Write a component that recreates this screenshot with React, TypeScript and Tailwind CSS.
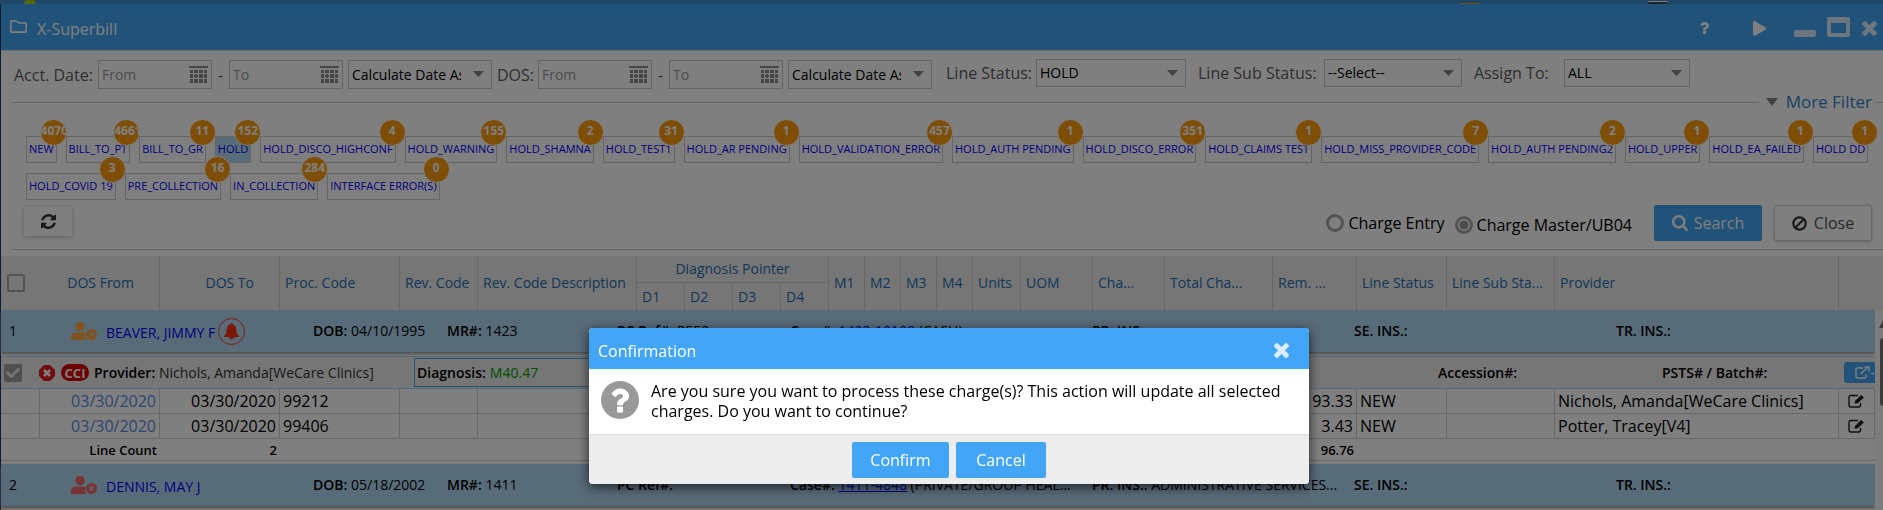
import React, { useState } from 'react';
import { FaRegFolder, FaPlay, FaCheck } from 'react-icons/fa';

const statuses = [
  { name: 'NEW', count: 4070 },
  { name: 'BILL_TO_PT', count: 4661 },
  { name: 'BILL_TO_GR', count: 11 },
  { name: 'HOLD', count: 152 },
  { name: 'HOLD_DISCO_HIGHCONF', count: 4 },
  { name: 'HOLD_WARNING', count: 155 },
  { name: 'HOLD_SHAMNA', count: 2 },
  { name: 'HOLD_TEST1', count: 31 },
  { name: 'HOLD_AR PENDING', count: 1 },
  { name: 'HOLD_VALIDATION_ERROR', count: 457 },
  { name: 'HOLD_AUTH PENDING', count: 1 },
  { name: 'HOLD_DISCO_ERROR', count: 351 },
  { name: 'HOLD_CLAIMS TEST', count: 1 },
  { name: 'HOLD_MISS_PROVIDER_CODE', count: 7 },
  { name: 'HOLD_AUTH PENDING2', count: 2 },
  { name: 'HOLD_UPPER', count: 1 },
  { name: 'HOLD_EA_FAILED', count: 1 },
  { name: 'HOLD DD', count: 1 },
  { name: 'HOLD_COVID 19', count: 3 },
  { name: 'PRE_COLLECTION', count: 16 },
  { name: 'IN_COLLECTION', count: 284 },
  { name: 'INTERFACE ERROR(S)', count: 0 },
];

const lines = [
  { code: '99212', rem: '93.33', provider: 'Nichols, Amanda[WeCare Clinics]' },
  { code: '99406', rem: '3.43', provider: 'Potter, Tracey[V4]' },
];

const columns = [
  'w-[39px]', 'w-[120px]', 'w-[120px]', 'w-[120px]', 'w-[78px]', 'w-[159px]',
  'w-[48px]', 'w-[48px]', 'w-[48px]', 'w-[48px]',
  'w-[36px]', 'w-[36px]', 'w-[36px]', 'w-[36px]',
  'w-[48px]', 'w-[72px]', 'w-[72px]', 'w-[108px]', 'w-[84px]', 'w-[90px]', 'w-[108px]',
  '', 'w-[36px]', 'w-[8px]',
];

const CloseIcon = ({ className }: { className: string }) => (
  <svg className={className} viewBox="110 366 1188 1188" fill="currentColor"><path d="M1298 1322q0 40-28 68l-136 136q-28 28-68 28t-68-28l-294-294-294 294q-28 28-68 28t-68-28l-136-136q-28-28-28-68t28-68l294-294-294-294q-28-28-28-68t28-68l136-136q28-28 68-28t68 28l294 294 294-294q28-28 68-28t68 28l136 136q28 28 28 68t-28 68l-294 294 294 294q28 28 28 68z" /></svg>
);

const QuestionIcon = ({ className }: { className: string }) => (
  <svg className={className} viewBox="60 128 960 1280" fill="currentColor"><path d="M704 1128v240q0 16-12 28t-28 12h-240q-16 0-28-12t-12-28v-240q0-16 12-28t28-12h240q16 0 28 12t12 28zm316-600q0 54-15.500 101t-35 76.500-55 59.500-57.500 43.500-61 35.500q-41 23-68.500 65t-27.500 67q0 17-12 32.500t-28 15.500h-240q-15 0-25.500-18.500t-10.500-37.500v-45q0-83 65-156.500t143-108.500q59-27 84-56t25-76q0-42-46.500-74t-107.500-32q-65 0-108 29-35 25-107 115-13 16-31 16-12 0-25-8l-164-125q-13-10-15.500-25t5.500-28q160-266 464-266 80 0 161 31t146 83 106 127.500 41 158.500z" /></svg>
);

const RefreshIcon = ({ className }: { className: string }) => (
  <svg className={className} viewBox="0 0 1536 1536" fill="currentColor"><path d="M1511 928q0 5-1 7-64 268-268 434.500t-478 166.500q-146 0-282.500-55t-243.500-157l-129 129q-19 19-45 19t-45-19-19-45v-448q0-26 19-45t45-19h448q26 0 45 19t19 45-19 45l-137 137q71 66 161 102t187 36q134 0 250-65t186-179q11-17 53-117 8-23 30-23h192q13 0 22.500 9.500t9.500 22.500zm25-800v448q0 26-19 45t-45 19h-448q-26 0-45-19t-19-45 19-45l138-138q-148-137-349-137-134 0-250 65t-186 179q-11 17-53 117-8 23-30 23h-199q-13 0-22.500-9.500t-9.500-22.500v-7q65-268 270-434.500t480-166.500q146 0 284 55.500t245 156.500l130-129q19-19 45-19t45 19 19 45z" /></svg>
);

const SearchIcon = ({ className }: { className: string }) => (
  <svg className={className} viewBox="0 0 1664 1664" fill="currentColor"><path d="M1152 704q0-185-131.500-316.500t-316.500-131.500-316.500 131.500-131.500 316.500 131.500 316.500 316.500 131.500 316.500-131.500 131.500-316.500zm512 832q0 52-38 90t-90 38q-54 0-90-38l-343-342q-179 124-399 124-143 0-273.500-55.500t-225-150-150-225-55.500-273.500 55.500-273.500 150-225 225-150 273.500-55.500 273.500 55.500 225 150 150 225 55.500 273.500q0 220-124 399l343 343q37 37 37 90z" /></svg>
);

// person with a small status disc: clock for pending, cross for rejected
const UserIcon = ({ className, pending }: { className: string; pending?: boolean }) => (
  <svg className={className} viewBox="0 0 26 18" fill="currentColor">
    <circle cx="9" cy="4.500" r="4.700" />
    <path d="M0 18V15.500Q0 10.500 5 10.500H13Q14.500 10.500 15 10.800Q13 13.500 15 18Z" />
    <circle cx="20.500" cy="12.500" r="5.500" />
    {pending
      ? <path d="M20.500 9.500V13H23" fill="none" stroke="#b1d6f2" strokeWidth="1.400" />
      : <path d="M18.500 10.500 22.500 14.500M22.500 10.500 18.500 14.500" fill="none" stroke="#b1d6f2" strokeWidth="1.600" />}
  </svg>
);

function DateField({ label, placeholder }: { label: string; placeholder: string }) {
  return (
    <div className="flex h-[29px] w-[114px] items-center border border-[#c8c8c8] bg-white pr-[3px]">
      <input aria-label={label} placeholder={placeholder} className="w-full min-w-0 flex-1 bg-transparent pl-[3px] text-[14px] text-black outline-none placeholder:text-[#9a9a9a]" />
      <svg className="h-[18px] w-[19px] shrink-0" viewBox="0 0 19 18" fill="#8c8c8c">
        <path d="M0 0h19v2H0zM1 4h3v3H1zM5 4h4v3H5zM10 4h4v3h-4zM15 4h3v3h-3zM1 8h3v4H1zM15 8h3v4h-3zM10 8h4v4h-4zM1 13h3v4H1zM5 13h4v4H5zM10 13h4v4h-4zM15 13h3v4h-3zM6 8h2v4H6zM5 9h4v2H5z" />
      </svg>
    </div>
  );
}

function SelectField({ id, label, value, className }: { id: string; label?: string; value: string; className: string }) {
  return (
    <div className={`relative ${className}`}>
      <select id={id} aria-label={label} className="h-full w-full appearance-none overflow-hidden rounded-none border border-[#c8c8c8] bg-white pl-[3px] pr-[30px] text-[14px] text-black">
        <option>{value}</option>
      </select>
      <svg className="pointer-events-none absolute right-2 top-[11px] h-[6px] w-[11px]" viewBox="0 0 11 6" fill="#848484"><path d="M0 0h11L5.5 6z" /></svg>
    </div>
  );
}

function PatientRow({ no, name, dob, mr, pcRef, caseNo, caseType, insurance, alert }: any) {
  return (
    <tr>
      <td colSpan={23} className="h-[42px] bg-[#b1d6f2] p-0 text-[14px] shadow-[0_2px_3px_#999]">
        <div className="flex items-center whitespace-nowrap">
          <span className="w-[70px] pl-2">{no}</span>
          <div className="flex w-[242px] items-center">
            <UserIcon pending={alert} className={`h-[18px] w-[26px] shrink-0 ${alert ? 'text-[#ffa83c]' : 'text-[#f06464]'}`} />
            <a href="#" className="pl-[9px] pr-[3px] pt-[4px] text-[#0000ff]">{name}</a>
            {alert && (
              <span className="flex size-[27px] shrink-0 items-center justify-center rounded-full border border-[#ff3d14]">
                <svg className="size-[17px]" viewBox="0 0 17 17" fill="#ff2f00"><path d="M8.500 0Q9.500 0 9.500 1.300Q13 2 13.200 6.500Q13.300 11 16 13V14H11Q10.800 16.500 8.500 16.500T6 14H1V13Q3.700 11 3.800 6.500Q4 2 7.500 1.300Q7.500 0 8.500 0Z" /></svg>
              </span>
            )}
          </div>
          <span className="w-[134px]"><b className="font-semibold">DOB:</b> {dob}</span>
          <span className="w-[170px]"><b className="font-semibold">MR#:</b> {mr}</span>
          <span className="w-[173px]"><b className="font-semibold">PC Ref#:</b> {pcRef}</span>
          <span className="w-[302px]"><b className="font-semibold">Case#:</b> <a href="#" className="text-[#0000ff] underline">{caseNo}</a> {caseType}</span>
          <span className="w-[262px]"><b className="font-semibold">PR. INS.:</b> {insurance}</span>
          <span className="w-[262px]"><b className="font-semibold">SE. INS.:</b></span>
          <b className="font-semibold">TR. INS.:</b>
        </div>
      </td>
      <td className="p-0"></td>
    </tr>
  );
}

export default function App() {
  const [active, setActive] = useState('HOLD');
  const [mode, setMode] = useState('master');

  const th = 'border-r border-[#cfcfcf] px-[5px] text-left font-normal';
  const cell = 'border-b border-r border-[#d0d0d0] px-[3px]';
  const radio = 'size-[18px] appearance-none rounded-full border-[3px] border-[#a6a6a6] bg-white';

  return (
    <div className="relative h-screen overflow-hidden bg-[#3b8cce] font-['Open_Sans','Noto_Sans',sans-serif] text-black">
      <div className="flex h-1 items-end pl-6">
        <span className="h-1 w-3 rounded-t-full bg-[#a8c81e]"></span>
        <span className="flex-1"></span>
        <span className="mr-[167px] h-px w-5 bg-[#f0a020]"></span>
        <span className="mr-[214px] h-[3px] w-[22px] rounded-t-full border-t border-white bg-[#444466]"></span>
      </div>

      <div className="min-h-screen border-l border-[#223a58] bg-white">
        <header className="flex h-[46px] items-center bg-[#42a5f5] pl-[9px] pr-[6px] text-white">
          <FaRegFolder className="mb-[1px] size-[17px]" />
          <h1 className="flex-1 pl-[10px] pt-[4px] text-[16px] font-medium">X-Superbill</h1>
          <button aria-label="Help" className="mr-[43px] mt-[2px]"><QuestionIcon className="h-[12px] w-[9px]" /></button>
          <button aria-label="Run" className="mr-[27px] mt-[2px]"><FaPlay className="size-[15px]" /></button>
          <button aria-label="Minimize" className="mr-[11px] mt-[12px] h-[7px] w-[22px] rounded-[2px] bg-[#d9edfd]"></button>
          <button aria-label="Maximize" className="mr-[12px] h-[20px] w-[23px] rounded-[2px] border-4 border-t-[6px] border-[#d9edfd]"></button>
          <button aria-label="Close window" className="mt-[2px]"><CloseIcon className="size-[15px] text-[#d9edfd]" /></button>
        </header>

        <section className="flex h-[52px] items-center border-t border-[#d8d8d8] pb-[4px] pl-[13px] text-[16px] text-[#5c5c5c]">
          <span className="w-[84px]">Acct. Date:</span>
          <DateField label="Account date from" placeholder="From" />
          <span className="w-[17px] text-center">-</span>
          <DateField label="Account date to" placeholder="To" />
          <SelectField id="acctRange" label="Account date range" value="Calculate Date As" className="ml-[5px] h-[29px] w-[144px]" />
          <span className="w-[46px] pl-[5px]">DOS:</span>
          <DateField label="DOS from" placeholder="From" />
          <span className="w-[17px] text-center">-</span>
          <DateField label="DOS to" placeholder="To" />
          <SelectField id="dosRange" label="DOS range" value="Calculate Date As" className="ml-[5px] h-[29px] w-[144px]" />
          <div className="flex items-center pb-[4px] whitespace-nowrap">
            <label htmlFor="lineStatus" className="w-[104px] pl-[14px]">Line Status:</label>
            <SelectField id="lineStatus" value="HOLD" className="h-[28px] w-[150px]" />
            <label htmlFor="lineSub" className="w-[138px] pl-[12px]">Line Sub Status:</label>
            <SelectField id="lineSub" value="--Select--" className="h-[28px] w-[138px]" />
            <label htmlFor="assignTo" className="w-[102px] pl-[12px]">Assign To:</label>
            <SelectField id="assignTo" value="ALL" className="h-[28px] w-[126px]" />
          </div>
        </section>

        <div className="flex h-0 items-center pl-[11px]">
          <span className="h-px flex-1 bg-[#c8c8c8]"></span>
          <button className="flex items-center gap-2 pl-[7px] pr-[3px] text-[17px] text-[#3484c6]">
            <svg className="h-[8px] w-[12px]" viewBox="0 0 12 8" fill="#848484"><path d="M0 0h12L6 8z" /></svg>
            More Filter
          </button>
          <span className="h-px w-2 bg-[#c8c8c8]"></span>
        </div>

        <ul className="flex flex-wrap gap-x-[9px] gap-y-[10px] pl-[25px] pr-2 pt-[34px]">
          {statuses.map((status) => (
            <li key={status.name} className="relative">
              <button
                onClick={() => setActive(status.name)}
                className={`block h-[27px] border border-[#c8c8c8] px-[2px] text-[11px] whitespace-nowrap text-[#0000ff] ${active === status.name ? 'bg-[#b3d9f5]' : ''}`}
              >
                {status.name}
              </button>
              <span className="absolute -right-[10px] -top-[17px] size-[27px] overflow-hidden rounded-full border border-white bg-[#ff9c0c] pt-[2px] text-center text-[12px] font-bold text-white">
                {status.count}
              </span>
            </li>
          ))}
        </ul>

        <div className="flex h-[49px] items-center pb-[3px] pl-[23px] pr-[11px] text-[16px]">
          <button aria-label="Refresh" className="mb-[3px] flex h-[29px] w-[48px] items-center justify-center bg-white shadow-[0_1px_5px_#bbb]">
            <RefreshIcon className="size-[15px] text-[#333]" />
          </button>
          <div className="flex-1"></div>
          <label className="flex items-center gap-[4px]">
            <input type="radio" name="mode" checked={mode === 'entry'} onChange={() => setMode('entry')} className={radio} />
            Charge Entry
          </label>
          <label className="ml-[10px] mr-[22px] flex items-center gap-[4px] pt-[4px]">
            <input type="radio" name="mode" checked={mode === 'master'} onChange={() => setMode('master')} className={`${radio} checked:bg-[radial-gradient(#9a9a9a_0_4px,#fff_5px)]`} />
            Charge Master/UB04
          </label>
          <button className="mr-[12px] flex h-[36px] w-[108px] items-center justify-center gap-[6px] rounded-[2px] bg-[#42a5f5] text-white">
            <SearchIcon className="size-[16px]" />
            Search
          </button>
          <button className="flex h-[36px] w-[98px] items-center justify-center gap-[7px] rounded-[2px] border border-[#d0d0d0] bg-white text-[#555] shadow-[0_1px_3px_#ccc]">
            <svg className="size-[15px]" viewBox="0 0 15 15" fill="none" stroke="#333" strokeWidth="2.200"><circle cx="7.500" cy="7.500" r="6.200" /><path d="M3.200 11.800 11.800 3.200" /></svg>
            Close
          </button>
        </div>
        <div className="ml-[11px] h-[7px] border-t border-[#c8c8c8]"></div>

        <div className="relative">
          <table className="w-full table-fixed border-separate border-spacing-0 leading-[20px]">
            <colgroup>
              {columns.map((width, i) => <col key={i} className={width} />)}
            </colgroup>
            <thead className="bg-[#ececec] text-[14px] text-[#1d6fb5]">
              <tr className="h-[27px]">
                <th rowSpan={2} className="p-0 text-left">
                  <input type="checkbox" aria-label="Select all" className="ml-[6px] block size-[18px] appearance-none rounded-[2px] border-2 border-[#a6a6a6]" />
                </th>
                <th rowSpan={2} className="border-r border-[#cfcfcf] pr-[25px] text-right font-normal">DOS From</th>
                <th rowSpan={2} className="border-r border-[#cfcfcf] pr-[25px] text-right font-normal">DOS To</th>
                <th rowSpan={2} className={th}>Proc. Code</th>
                <th rowSpan={2} className={th}>Rev. Code</th>
                <th rowSpan={2} className={th}>Rev. Code Description</th>
                <th colSpan={4} className="border-b border-r border-[#cfcfcf] font-normal">Diagnosis Pointer</th>
                {['M1', 'M2', 'M3', 'M4', 'Units', 'UOM', 'Cha...', 'Total Cha...', 'Rem. ...', 'Line Status', 'Line Sub Sta...', 'Provider'].map((name) => (
                  <th key={name} rowSpan={2} className={`${th} whitespace-nowrap`}>{name}</th>
                ))}
                <th rowSpan={2} colSpan={2}></th>
              </tr>
              <tr className="h-[27px]">
                {['D1', 'D2', 'D3', 'D4'].map((name) => <th key={name} className={th}>{name}</th>)}
              </tr>
            </thead>
            <tbody>
              <PatientRow no="1" name="BEAVER, JIMMY F" dob="04/10/1995" mr="1423" pcRef="R552" caseNo="1423-10108" caseType="(CASH)" alert />
              <tr className="h-[4px]"><td colSpan={24} className="p-0"></td></tr>
              <tr className="text-[14px]">
                <td colSpan={23} className="h-[33px] border-y border-[#a8d4f0] bg-[#ececec] p-0">
                  <div className="flex h-[31px] items-center whitespace-nowrap">
                    <span className="flex w-[38px] pl-[3px]">
                      <label className="flex size-[18px] items-center justify-center rounded-[2px] bg-[#a0a0a0]">
                        <input type="checkbox" aria-label="Select charge" defaultChecked className="peer sr-only" />
                        <FaCheck className="hidden size-[14px] text-[#ececec] peer-checked:block" />
                      </label>
                    </span>
                    <svg className="size-[16px] shrink-0" viewBox="0 0 16 16"><path d="M5 0H11L16 5V11L11 16H5L0 11V5Z" fill="#e01c1c" /><path d="M5 5 11 11M11 5 5 11" stroke="#fff" strokeWidth="2.500" /></svg>
                    <span className="ml-[6px] flex h-[17px] w-[28px] items-center justify-center rounded-full bg-[#d80000] text-[13px] font-bold text-white">CCI</span>
                    <span className="w-[325px] pl-[5px] text-[#333]"><b className="font-semibold text-black">Provider:</b> Nichols, Amanda[WeCare Clinics]</span>
                    <span className="flex h-[29px] flex-1 items-center border border-[#42a5f5] pl-[2px]">
                      <b className="pr-1 font-semibold">Diagnosis:</b> <span className="text-[#00a000]">M40.47</span>
                    </span>
                    <span className="flex w-[564px] pl-[158px]">
                      <b className="w-[224px] font-semibold">Accession#:</b>
                      <b className="font-semibold">PSTS# / Batch#:</b>
                    </span>
                    <button aria-label="Open charge" className="flex h-[21px] w-[31px] items-center rounded-l-[3px] bg-[#42a5f5] pl-[11px] text-white">
                      <svg className="h-[13px] w-[15px] shrink-0" viewBox="0 0 15 13" fill="none" stroke="currentColor" strokeWidth="1.5"><path d="M8 2H2.500Q1 2 1 3.500V10.500Q1 12 2.500 12H9.500Q11 12 11 10.500V8M5.500 8 13 1M9.500 1H14V5.500" /></svg>
                      -
                    </button>
                  </div>
                </td>
                <td className="p-0"></td>
              </tr>
              {lines.map((line) => (
                <tr key={line.code} className="h-[25px] text-[16px]">
                  <td className={cell}></td>
                  <td className={`${cell} text-right`}><a href="#" className="text-[#5a8ce6]">03/30/2020</a></td>
                  <td className={`${cell} text-right`}>03/30/2020</td>
                  <td className={cell}>{line.code}</td>
                  {columns.slice(4, 18).map((_, i) => <td key={i} className={cell}></td>)}
                  <td className={`${cell} text-right`}>{line.rem}</td>
                  <td className={cell}>NEW</td>
                  <td className={cell}></td>
                  <td className={cell}>{line.provider}</td>
                  <td className={`${cell} pl-[9px]`}>
                    <button aria-label="Edit line" className="block">
                      <svg className="h-[14px] w-[17px]" viewBox="0 0 17 14" fill="none" stroke="#222"><path d="M10 1.500H3Q1 1.500 1 3.500V11Q1 13 3 13H10.500Q12.500 13 12.500 11V9" strokeWidth="1.400" /><path d="M6.500 9.500 7 7 13 1 16 3.500 9.500 9.500Z" fill="#222" stroke="none" /></svg>
                    </button>
                  </td>
                  <td className="p-0"></td>
                </tr>
              ))}
              <tr className="h-[22px] text-[13px] font-semibold">
                <td colSpan={2} className="border-b border-[#d0d0d0] px-[3px] text-right">Line Count</td>
                <td className="border-b border-[#d0d0d0] px-[3px] text-right">2</td>
                <td colSpan={16} className="border-b border-[#d0d0d0] px-[3px] text-right">96.76</td>
                <td colSpan={4} className="border-b border-[#d0d0d0]"></td>
                <td className="p-0"></td>
              </tr>
              <tr className="h-[3px]"><td colSpan={24} className="p-0"></td></tr>
              <PatientRow no="2" name="DENNIS, MAY J" dob="05/18/2002" mr="1411" caseNo="1411-4848" caseType="(PRIVATE/GROUP HEAL..." insurance="ADMINISTRATIVE SERVICES..." />
            </tbody>
          </table>
          <div className="absolute right-0 top-[54px] flex w-[8px] flex-col items-end overflow-hidden bg-[#f8f8f8] pb-[200px]">
            <svg className="mt-[10px] h-[8px] w-[4px]" viewBox="0 0 4 8" fill="#777"><path d="M0 8 4 0V8Z" /></svg>
            <span className="mt-[10px] h-[68px] w-[3px] rounded-l-[3px] bg-[#777]"></span>
          </div>
        </div>
      </div>

      <div className="fixed inset-0 flex items-start justify-center bg-black/50 pl-[15px] pt-[328px]">
        <div role="dialog" aria-labelledby="confirm-title" className="w-[720px] overflow-hidden rounded-[4px] bg-white shadow-[0_3px_12px_rgba(0,0,0,0.7)]">
          <div className="flex h-[41px] items-center bg-[#42a5f5] pl-[9px] pr-[20px] text-white">
            <h2 id="confirm-title" className="flex-1 pt-[5px] text-[16px] font-medium">Confirmation</h2>
            <button aria-label="Close" className="mt-[3px]"><CloseIcon className="size-[15px] text-[#d9edfd]" /></button>
          </div>
          <div className="flex h-[65px] gap-[12px] pl-[12px] pt-[12px]">
            <span className="flex size-[38px] shrink-0 items-center justify-center rounded-full bg-[#999]">
              <QuestionIcon className="h-[25px] w-[18px] text-white" />
            </span>
            <p className="w-[635px] text-[16px] leading-[20px]">
              Are you sure you want to process these charge(s)? This action will update all selected charges. Do you want to continue?
            </p>
          </div>
          <div className="flex h-[50px] items-center justify-center gap-[7px] border-t border-[#dcdcdc] bg-[#ededed] text-[16px] font-medium text-white">
            <button className="h-[36px] w-[97px] rounded-[2px] bg-[#42a5f5]">Confirm</button>
            <button className="h-[36px] w-[90px] rounded-[2px] bg-[#42a5f5]">Cancel</button>
          </div>
        </div>
      </div>
    </div>
  );
}
